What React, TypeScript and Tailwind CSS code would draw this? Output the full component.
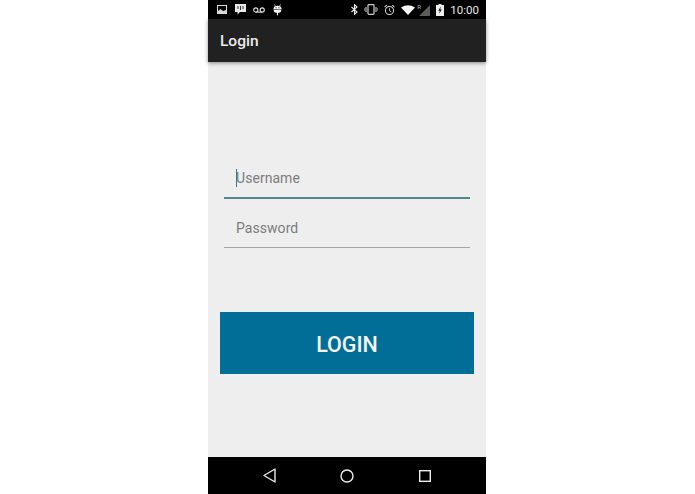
import React from 'react';

const StatusLeft: React.FC = () => (
  <div className="flex items-center">
    <svg width="10" height="9" viewBox="0 0 10 9" className="ml-[9px]">
      <rect x="0.5" y="0.5" width="9" height="8" fill="none" stroke="#d8d8d8" />
      <path d="M1 8 L1 6 L3.5 4 L6 6 L9 5 L9 8 Z" fill="#d8d8d8" />
    </svg>
    <svg width="11" height="11" viewBox="0 0 11 11" className="ml-[8px]">
      <path d="M0 0 H11 V8 H5 L2.5 10.5 V8 H0 Z" fill="#e8e8e8" />
      <path d="M3 2 V5 M5.5 2 V6 M8 2 V5" stroke="#333" strokeWidth="1" />
    </svg>
    <svg width="12" height="6" viewBox="0 0 12 6" className="ml-[7px]">
      <circle cx="2.8" cy="3" r="2.1" fill="none" stroke="#ddd" strokeWidth="1.1" />
      <circle cx="9.2" cy="3" r="2.1" fill="none" stroke="#ddd" strokeWidth="1.1" />
      <path d="M2.8 5.1 H9.2" stroke="#ddd" strokeWidth="1.1" />
    </svg>
    <svg width="9" height="13" viewBox="0 0 10 13" className="ml-[8px]">
      <path d="M1.5 0.8 L3 3 M8.5 0.8 L7 3" stroke="#f2f2f2" strokeWidth="0.8" />
      <path d="M0.5 6 A4.5 3.8 0 0 1 9.5 6 V6.6 H0.5 Z" fill="#f2f2f2" />
      <path d="M0.8 7 H9.2 V7.4 A4.2 3 0 0 1 0.8 7.4 Z" fill="#f2f2f2" />
      <path d="M5 10 V13" stroke="#f2f2f2" strokeWidth="1.2" />
      <circle cx="3.4" cy="4.6" r="0.6" fill="#000" />
      <circle cx="6.6" cy="4.6" r="0.6" fill="#000" />
    </svg>
  </div>
);

const StatusRight: React.FC = () => (
  <div className="flex items-center">
    <svg width="7" height="11" viewBox="0 0 7 11">
      <path d="M0.5 3 L6 8 L3.5 10.3 V0.7 L6 3 L0.5 8" fill="none" stroke="#eee" strokeWidth="1.1" />
    </svg>
    <svg width="14" height="11" viewBox="0 0 14 11" className="ml-[6px]">
      <rect x="4" y="0.7" width="6" height="9.6" rx="0.8" fill="none" stroke="#ccc" strokeWidth="1.2" />
      <path d="M2 3 V8 M12 3 V8" stroke="#bbb" strokeWidth="1.2" />
      <path d="M0.4 4 V7 M13.6 4 V7" stroke="#888" strokeWidth="0.8" />
    </svg>
    <svg width="11" height="12" viewBox="0 0 12 12" className="ml-[6px]">
      <circle cx="6" cy="6.5" r="4.4" fill="none" stroke="#ddd" strokeWidth="1.1" />
      <path d="M6 4 V6.8 L8 8" fill="none" stroke="#ddd" strokeWidth="0.9" />
      <path d="M0.6 2.8 L3 0.8 M11.4 2.8 L9 0.8" stroke="#ddd" strokeWidth="1.1" />
    </svg>
    <svg width="14" height="10" viewBox="0 0 14 10" className="ml-[6px]">
      <path d="M0 2.4 Q7 -2 14 2.4 L7 10 Z" fill="#f4f4f4" />
    </svg>
    <div className="relative ml-[2px] h-[12px] w-[13px]">
      <span className="absolute left-0 top-[-1px] font-['Roboto',sans-serif] text-[6px] leading-[7px] text-[#bbb]">R</span>
      <svg width="11" height="11" viewBox="0 0 11 11" className="absolute right-0 bottom-0">
        <path d="M0 11 L11 0 V11 Z" fill="#5c5c5c" />
      </svg>
    </div>
    <svg width="8" height="12" viewBox="0 0 8 12" className="ml-[6px]">
      <path d="M2.5 0 H5.5 V1 H8 V12 H0 V1 H2.5 Z" fill="#eee" />
      <path d="M4.8 2.5 L2.2 6.8 H3.8 L3.2 9.8 L5.8 5.4 H4.2 Z" fill="#111" />
    </svg>
    <span className="ml-[6px] mr-[7px] font-['Roboto',sans-serif] text-[11.5px] leading-[14px] text-[#e8e8e8]">10:00</span>
  </div>
);

const Field: React.FC<{ label: string; focused?: boolean }> = ({ label, focused }) => (
  <div className={`flex h-[49.5px] items-end pl-[12px] ${focused ? 'border-b-2 border-[#4d8a8f] pb-[9px]' : 'border-b border-[#a6a6a6] pb-[9px]'}`}>
    <span className="relative font-['Roboto',sans-serif] text-[14px] leading-[20px] tracking-[0.05px] text-[#7c7c7c]">
      {focused && <span className="absolute left-0 top-[1px] h-[18px] w-px bg-[#2f7f86]" />}
      {label}
    </span>
  </div>
);

const App: React.FC = () => {
  return (
    <div className="h-[494px] w-[695px] bg-white pl-[208px]">
      <div className="flex h-full w-[278px] flex-col bg-[#eeeeee]">
        <div className="flex h-[19px] shrink-0 items-center justify-between bg-black">
          <StatusLeft />
          <StatusRight />
        </div>
        <div className="z-10 flex h-[43px] shrink-0 items-center bg-[#212121] pl-[12px] pt-[2px] shadow-[0_1px_4px_rgba(0,0,0,0.45)]">
          <span className="font-['Roboto',sans-serif] text-[15.5px] font-medium text-[#ececec]">Login</span>
        </div>
        <div className="flex flex-1 flex-col pt-[87px]">
          <div className="mx-[16px] flex flex-col">
            <Field label="Username" focused />
            <Field label="Password" />
          </div>
          <button className="mx-[12px] mt-[64px] flex h-[62px] items-center justify-center bg-[#006e96] pt-[4px] font-['Roboto',sans-serif] text-[21.5px] font-medium text-[#f5f5f5]">
            LOGIN
          </button>
        </div>
        <div className="flex h-[37px] shrink-0 items-center bg-black">
          <svg width="13" height="15" viewBox="0 0 13 15" className="ml-[55px]">
            <path d="M12 1 V14 L1 7.5 Z" fill="none" stroke="#e8e8e8" strokeWidth="1.4" strokeLinejoin="round" />
          </svg>
          <svg width="14" height="14" viewBox="0 0 14 14" className="ml-[64px]">
            <circle cx="7" cy="7" r="6" fill="none" stroke="#eee" strokeWidth="1.4" />
          </svg>
          <svg width="12" height="12" viewBox="0 0 12 12" className="ml-[65px]">
            <rect x="0.7" y="0.7" width="10.6" height="10.6" fill="none" stroke="#eee" strokeWidth="1.4" />
          </svg>
        </div>
      </div>
    </div>
  );
};

export default App;
